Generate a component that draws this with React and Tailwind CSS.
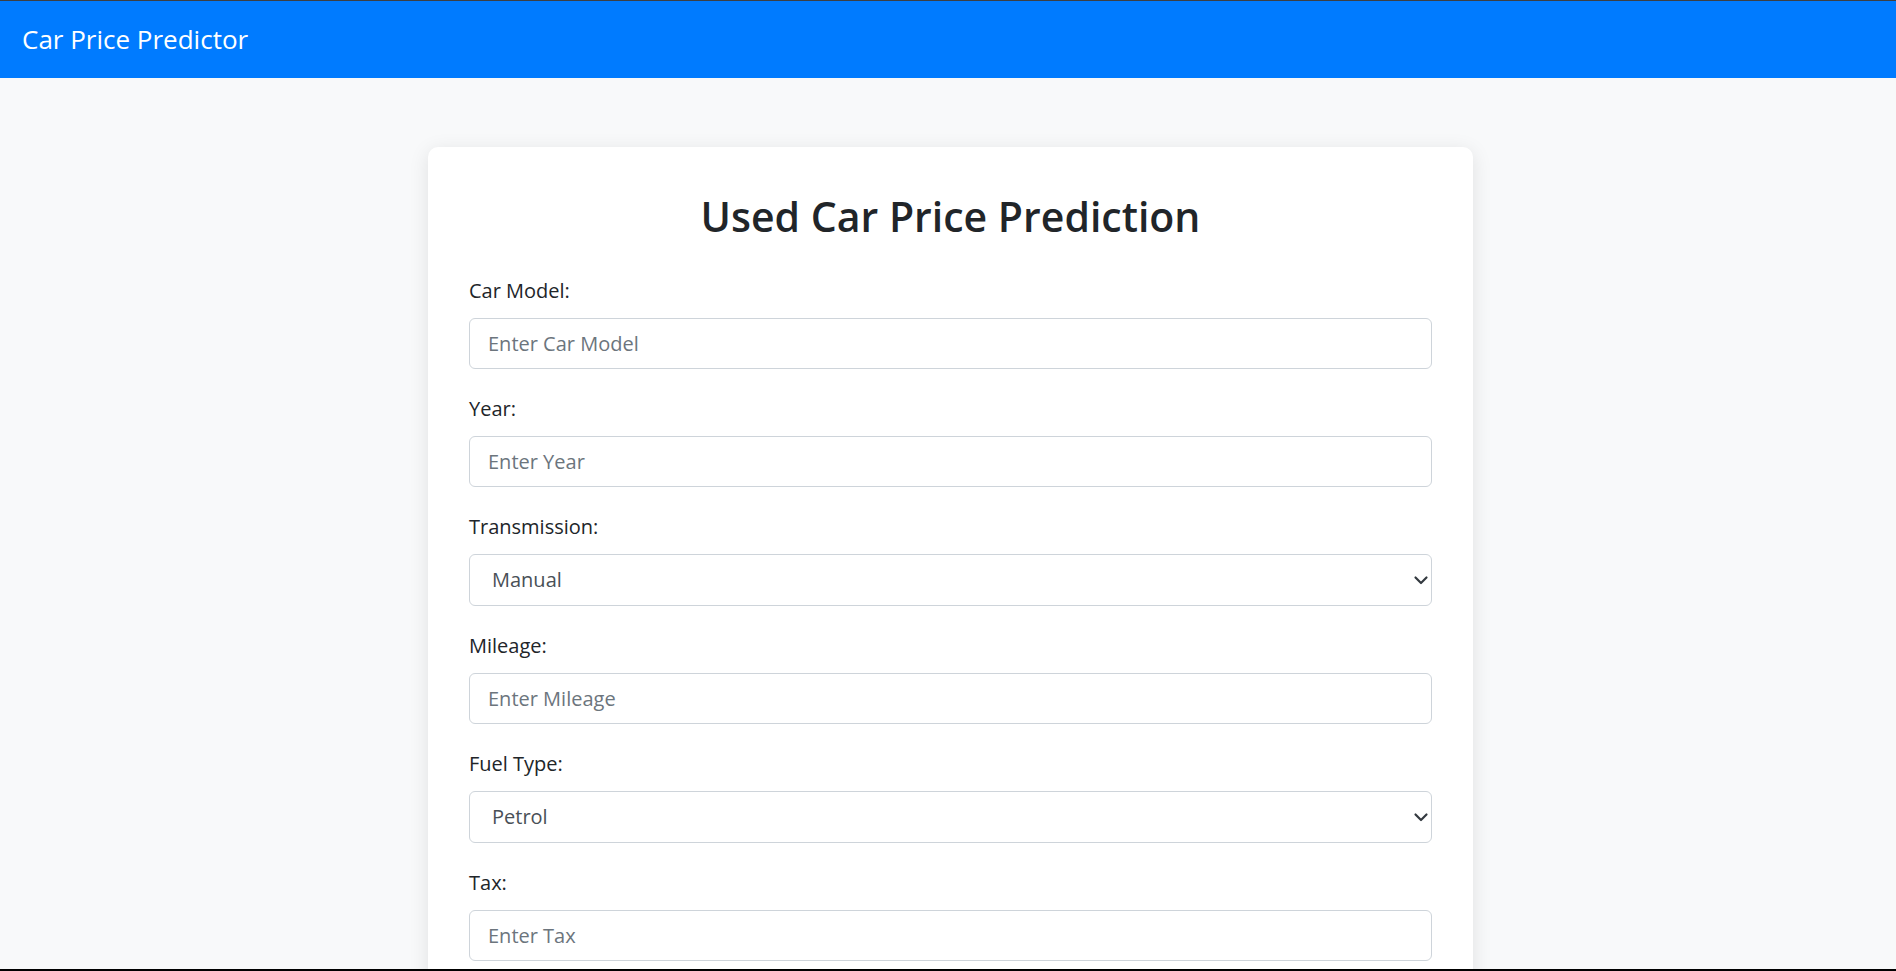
import React, { useState } from 'react';

const fields = [
    { name: 'model', label: 'Car Model:', placeholder: 'Enter Car Model' },
    { name: 'year', label: 'Year:', placeholder: 'Enter Year' },
    { name: 'transmission', label: 'Transmission:', options: ['Manual', 'Automatic', 'Semi-Auto'] },
    { name: 'mileage', label: 'Mileage:', placeholder: 'Enter Mileage' },
    { name: 'fuelType', label: 'Fuel Type:', options: ['Petrol', 'Diesel', 'Hybrid', 'Electric'] },
    { name: 'tax', label: 'Tax:', placeholder: 'Enter Tax' },
];

const Chevron = () => (
    <svg className="pointer-events-none absolute right-[3px] top-1/2 -translate-y-1/2" width="16" height="16" viewBox="0 0 16 16" fill="none">
        <path d="M2.5 5.5l5.5 5.5 5.5-5.5" stroke="#343a40" strokeWidth="2.2" strokeLinecap="round" strokeLinejoin="round" />
    </svg>
);

const Field = ({ field, value, onChange }) => (
    <div className="mb-[25px]">
        <label htmlFor={field.name} className="block text-[20px] leading-[30px] text-[#212529] mb-[12px]">{field.label}</label>
        {field.options ? (
            <div className="relative">
                <select
                    id={field.name}
                    name={field.name}
                    value={value}
                    onChange={onChange}
                    className="block w-full h-[52px] appearance-none rounded-[6px] border border-[#ced4da] bg-white pl-[22px] pr-8 text-[20px] text-[#495057] outline-none"
                >
                    {field.options.map(opt => <option key={opt}>{opt}</option>)}
                </select>
                <Chevron />
            </div>
        ) : (
            <input
                id={field.name}
                name={field.name}
                value={value}
                onChange={onChange}
                placeholder={field.placeholder}
                className="block w-full h-[51px] rounded-[6px] border border-[#ced4da] bg-white px-[18px] text-[20px] text-[#495057] placeholder:text-[#6c757d] outline-none"
            />
        )}
    </div>
);

export default function App() {
    const [formData, setFormData] = useState({ transmission: 'Manual', fuelType: 'Petrol' });

    const handleChange = (e) => {
        setFormData({ ...formData, [e.target.name]: e.target.value });
    };

    return (
        <div className="h-[971px] overflow-hidden border-t border-[#3c3f43] border-b-[2px] border-b-black bg-[#f8f9fa] font-['Open_Sans',sans-serif]">
            <nav className="h-[77px] bg-[#007bff] flex items-center px-[22px]">
                <span className="text-[26px] text-white">Car Price Predictor</span>
            </nav>
            <main className="pt-[69px]">
                <div className="w-[1045px] ml-[428px] bg-white rounded-[10px] shadow-[0_4px_20px_rgba(0,0,0,0.1)] px-[41px] pt-[45px] pb-[120px]">
                    <h1 className="text-center text-[41px] leading-[1.2] font-semibold text-[#212529] mb-[35px]">Used Car Price Prediction</h1>
                    <form onSubmit={(e) => e.preventDefault()}>
                        {fields.map(f => (
                            <Field key={f.name} field={f} value={formData[f.name] || ''} onChange={handleChange} />
                        ))}
                    </form>
                </div>
            </main>
        </div>
    );
}
